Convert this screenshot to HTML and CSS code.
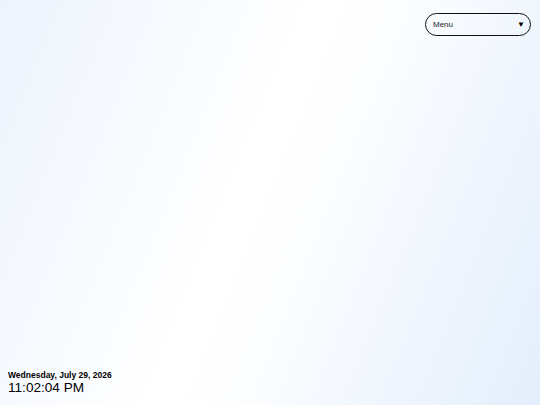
FILE: index.html
```html
<!DOCTYPE html>
<html>
<head>
<meta charset="utf-8">
<link rel="stylesheet" href="styles.css">
</head>
<body>
<div class="page">
  <header class="top">
    <div class="menu">
      <span class="menu-label">Menu</span>
      <span class="menu-arrow">▼</span>
    </div>
  </header>
  <footer class="clock">
    <div class="date">Wednesday, July 29, 2026</div>
    <div class="time">11:02:04 PM</div>
  </footer>
</div>
</body>
</html>
```
FILE: styles.css
```css
html, body {
  margin: 0;
  padding: 0;
  height: 100%;
}
body {
  font-family: "Liberation Sans", Arial, sans-serif;
  background: linear-gradient(112deg, #edf4fd 0%, #ffffff 45%, #fdfeff 55%, #e3eefc 100%);
  color: #000;
}
.page {
  display: flex;
  flex-direction: column;
  height: 405px;
  box-sizing: border-box;
  padding: 13px 9px 9px 8px;
}
.top {
  display: flex;
  justify-content: flex-end;
}
.menu {
  width: 106px;
  height: 23px;
  box-sizing: border-box;
  border: 1.3px solid #111;
  border-radius: 12px;
  display: flex;
  align-items: center;
  justify-content: space-between;
  padding: 0 5px 0 7px;
  background: transparent;
}
.menu-label {
  font-size: 8px;
  color: #222;
}
.menu-arrow {
  font-size: 8px;
  color: #000;
}
.clock {
  margin-top: auto;
}
.date {
  font-size: 8.5px;
  font-weight: bold;
  line-height: 10px;
}
.time {
  font-size: 13.6px;
  line-height: 16px;
}
```
